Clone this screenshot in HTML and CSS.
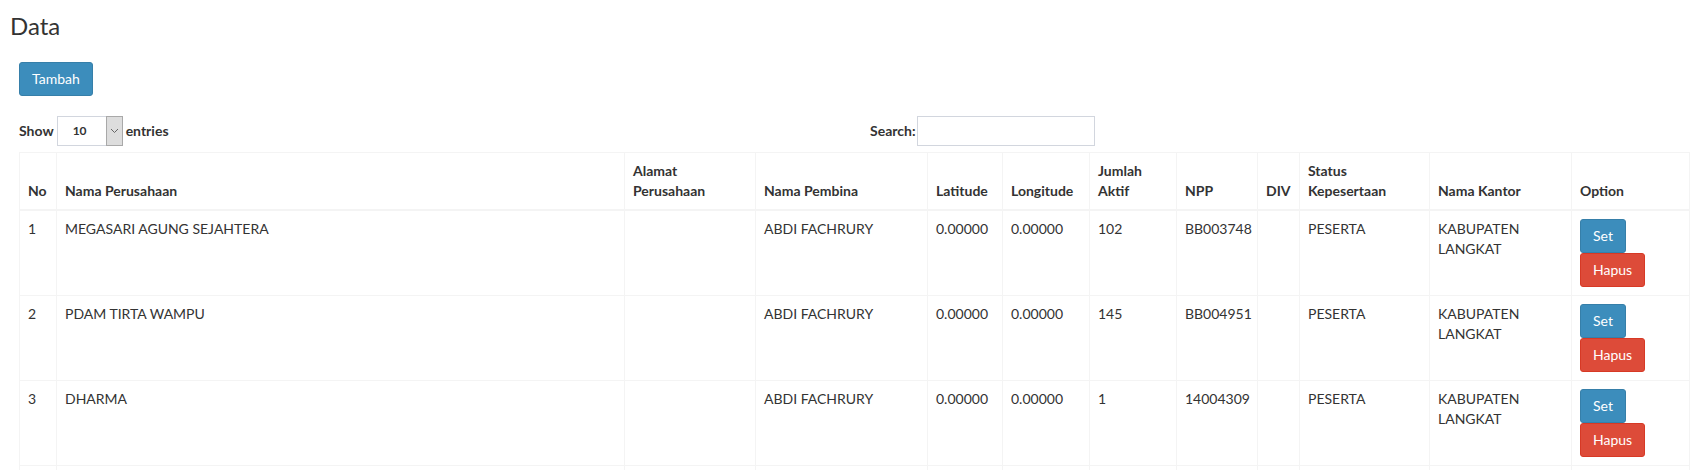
FILE: index.html
```html
<!DOCTYPE html>
<html lang="id">
<head>
<meta charset="utf-8">
<title>Data</title>
<link rel="stylesheet" href="styles.css">
</head>
<body>
<h1 class="page-title">Data</h1>
<div class="content">
  <div class="actions">
    <button class="btn btn-primary">Tambah</button>
  </div>
  <div class="dt-controls">
    <div class="dt-length">
      <label class="dt-label">Show
        <span class="select-box"><span class="select-value">10</span><span class="select-arrow"><svg width="9" height="6" viewBox="0 0 9 6"><path d="M1 1l3.5 3.5L8 1" fill="none" stroke="#666" stroke-width="1"/></svg></span></span>
        entries</label>
    </div>
    <div class="dt-filter">
      <label class="dt-label">Search:<span class="search-input"></span></label>
    </div>
  </div>
  <table class="data-table">
    <colgroup>
      <col class="w-no"><col class="w-nama"><col class="w-alamat"><col class="w-pembina"><col class="w-lat"><col class="w-long"><col class="w-jumlah"><col class="w-npp"><col class="w-div"><col class="w-status"><col class="w-kantor"><col class="w-option">
    </colgroup>
    <thead>
      <tr>
        <th>No</th><th>Nama Perusahaan</th><th>Alamat Perusahaan</th><th>Nama Pembina</th><th>Latitude</th><th>Longitude</th><th>Jumlah Aktif</th><th>NPP</th><th>DIV</th><th>Status Kepesertaan</th><th>Nama Kantor</th><th>Option</th>
      </tr>
    </thead>
    <tbody>
      <tr>
        <td>1</td><td>MEGASARI AGUNG SEJAHTERA</td><td></td><td>ABDI FACHRURY</td><td>0.00000</td><td>0.00000</td><td>102</td><td>BB003748</td><td></td><td>PESERTA</td><td>KABUPATEN LANGKAT</td>
        <td><div class="opt"><button class="btn btn-primary">Set</button><button class="btn btn-danger">Hapus</button></div></td>
      </tr>
      <tr>
        <td>2</td><td>PDAM TIRTA WAMPU</td><td></td><td>ABDI FACHRURY</td><td>0.00000</td><td>0.00000</td><td>145</td><td>BB004951</td><td></td><td>PESERTA</td><td>KABUPATEN LANGKAT</td>
        <td><div class="opt"><button class="btn btn-primary">Set</button><button class="btn btn-danger">Hapus</button></div></td>
      </tr>
      <tr>
        <td>3</td><td>DHARMA</td><td></td><td>ABDI FACHRURY</td><td>0.00000</td><td>0.00000</td><td>1</td><td>14004309</td><td></td><td>PESERTA</td><td>KABUPATEN LANGKAT</td>
        <td><div class="opt"><button class="btn btn-primary">Set</button><button class="btn btn-danger">Hapus</button></div></td>
      </tr>
      <tr class="row-more">
        <td></td><td></td><td></td><td></td><td></td><td></td><td></td><td></td><td></td><td></td><td></td><td></td>
      </tr>
    </tbody>
  </table>
</div>
</body>
</html>
```
FILE: styles.css
```css
html, body {
  margin: 0;
  padding: 0;
  background: #fff;
}
body {
  font-family: Lato, "Liberation Sans", sans-serif;
  font-size: 14px;
  line-height: 20px;
  color: #333;
}
.page-title {
  margin: 0;
  padding: 13px 10px 0;
  font-size: 24px;
  font-weight: 400;
  line-height: 26px;
  color: #333;
}
.content {
  padding: 0 17px 0 19px;
}
.actions {
  padding-top: 23px;
}
.btn {
  display: inline-block;
  font-family: inherit;
  font-size: 14px;
  line-height: 20px;
  padding: 6px 12px;
  border: 1px solid transparent;
  border-radius: 3px;
  color: #fff;
  cursor: pointer;
  white-space: nowrap;
}
.btn-primary {
  background: #3c8dbc;
  border-color: #367fa9;
}
.btn-danger {
  background: #dd4b39;
  border-color: #d73925;
}
.dt-controls {
  display: grid;
  grid-template-columns: 1fr 1fr;
  margin-top: 20px;
  height: 30px;
}
.dt-filter {
  padding-left: 16px;
}
.dt-label {
  display: flex;
  align-items: center;
  gap: 3px;
  font-weight: 700;
  height: 30px;
}
.dt-filter .dt-label {
  gap: 1px;
}
.select-box {
  display: inline-flex;
  width: 66px;
  height: 30px;
  box-sizing: border-box;
  border: 1px solid #d2d6de;
  background: #fff;
}
.select-value {
  flex: 1;
  padding-left: 15px;
  font-size: 12px;
  line-height: 28px;
  font-weight: 700;
  color: #333;
}
.select-arrow {
  width: 17px;
  box-sizing: border-box;
  background: #dddddd;
  border: 1px solid #a9a9a9;
  margin: -1px -1px -1px 0;
  display: flex;
  align-items: center;
  justify-content: center;
}
.search-input {
  display: inline-block;
  width: 178px;
  height: 30px;
  box-sizing: border-box;
  border: 1px solid #d2d6de;
  background: #fff;
}
.data-table {
  margin-top: 6px;
  width: 1670px;
  table-layout: fixed;
  border-collapse: collapse;
  border: 1px solid #f4f4f4;
}
.data-table th,
.data-table td {
  border: 1px solid #f4f4f4;
  padding: 8px;
  text-align: left;
  vertical-align: top;
  line-height: 20px;
}
.data-table th {
  vertical-align: bottom;
  font-weight: 700;
  border-bottom-width: 2px;
}
.row-more td {
  height: 68px;
}
.w-no { width: 37px; }
.w-nama { width: 568px; }
.w-alamat { width: 131px; }
.w-pembina { width: 172px; }
.w-lat { width: 75px; }
.w-long { width: 87px; }
.w-jumlah { width: 87px; }
.w-npp { width: 81px; }
.w-div { width: 42px; }
.w-status { width: 130px; }
.w-kantor { width: 142px; }
.w-option { width: 118px; }
.opt {
  display: flex;
  flex-direction: column;
  align-items: flex-start;
}
```
